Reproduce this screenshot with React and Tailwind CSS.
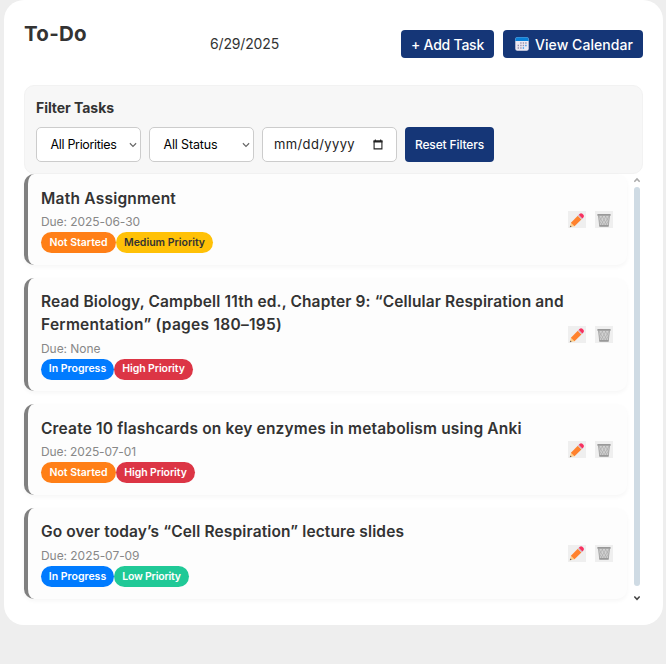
const STATUS = {
  notStarted: { label: 'Not Started', cls: 'bg-[#ff7f17] text-white w-[75px]' },
  inProgress: { label: 'In Progress', cls: 'bg-[#007bff] text-white w-[73px]' },
};

const PRIORITY = {
  high: { label: 'High Priority', cls: 'bg-[#dc3545] text-white w-[79px] tracking-[-0.08px]' },
  medium: { label: 'Medium Priority', cls: 'bg-[#ffc107] text-[#333] w-[97px]' },
  low: { label: 'Low Priority', cls: 'bg-[#20c997] text-white w-[75px] tracking-[-0.2px]' },
};

const TASKS = [
  {
    lines: [{ text: 'Math Assignment', cls: 'tracking-[0.23px]' }],
    due: '2025-06-30', dueCls: 'tracking-[-0.066px]', status: 'notStarted', priority: 'medium',
    height: 'h-[91px]',
  },
  {
    lines: [
      { text: 'Read Biology, Campbell 11th ed., Chapter 9: “Cellular Respiration and', cls: 'tracking-[0.135px]' },
      { text: 'Fermentation” (pages 180–195)', cls: 'tracking-[0.265px]' },
    ],
    due: 'None', dueCls: 'tracking-[-0.045px]', status: 'inProgress', priority: 'high',
    height: 'h-[113.7px]',
  },
  {
    lines: [{ text: 'Create 10 flashcards on key enzymes in metabolism using Anki', cls: 'tracking-[0.175px]' }],
    due: '2025-07-01', dueCls: 'tracking-[-0.114px]', status: 'notStarted', priority: 'high',
    height: 'h-[91px]',
  },
  {
    lines: [{ text: 'Go over today’s “Cell Respiration” lecture slides', cls: 'tracking-[0.13px]' }],
    due: '2025-07-09', dueCls: 'tracking-[-0.051px]', status: 'inProgress', priority: 'low',
    height: 'h-[91px]',
  },
];

function CalendarIcon() {
  return (
    <svg className="h-[14px] w-[14px] shrink-0" viewBox="0 0 14 14">
      <rect x="0.3" y="0.3" width="13.4" height="13.4" rx="2" fill="#eeeaf3" />
      <path d="M0.3 4V2.3a2 2 0 0 1 2-2h9.4a2 2 0 0 1 2 2V4z" fill="#0a80d8" />
      <g fill="#9a93ad">
        <path d="M5.2 5.3h1.4v1.4H5.2zM7.7 5.3h1.4v1.4H7.7zM10.2 5.3h1.4v1.4h-1.4zM2.6 7.8H4v1.4H2.6zM5.2 7.8h1.4v1.4H5.2zM7.7 7.8h1.4v1.4H7.7zM2.6 10.3H4v1.4H2.6zM5.2 10.3h1.4v1.4H5.2z" />
      </g>
      <path d="M10.2 7.8h1.4v1.4h-1.4zM7.7 10.3h1.4v1.4H7.7z" fill="#3d9be8" />
    </svg>
  );
}

function PencilIcon() {
  return (
    <svg className="h-[16px] w-[16px]" viewBox="0 0 16 16">
      <path d="M0.8 15.3l1.2-4.8 3.7 3.7z" fill="#ffd08a" />
      <path d="M0.8 15.3l.5-1.9 1.4 1.4z" fill="#6b5b5b" />
      <path d="M1.9 10.7l6.9-6.9 3.6 3.6-6.9 6.9z" fill="#ff822d" />
      <path d="M8.8 3.8l1.2-1.2 3.6 3.6-1.2 1.2z" fill="#d5b9c3" />
      <path d="M9.8 2.8l1-1a1.9 1.9 0 0 1 2.6 0l1 1a1.9 1.9 0 0 1 0 2.6l-1 1z" fill="#f8305f" />
    </svg>
  );
}

function TrashIcon() {
  return (
    <svg className="h-[16px] w-[16px]" viewBox="0 0 16 16">
      <path d="M2.4 3h11.2l-1.2 11.5H3.6z" fill="#d2d2d2" />
      <path
        d="M3 4l5.4 9.6M6 4l5 9M9.3 4l3 5M3.6 9l2.8 4.6M13 4L7.6 13.6M10 4l-5 9M6.7 4l-3 5M12.4 9l-2.8 4.6"
        stroke="#a6a6a6" strokeWidth="0.6" fill="none"
      />
      <path d="M2.5 3.4l1.2 10.4M13.5 3.4l-1.2 10.4" stroke="#a6a6a6" strokeWidth="1" />
      <rect x="1.3" y="1.9" width="13.4" height="1.8" rx="0.5" fill="#999" />
      <rect x="3.3" y="13.1" width="9.4" height="1.7" rx="0.5" fill="#999" />
    </svg>
  );
}

function Chevron() {
  return (
    <svg className="h-[6px] w-[8px]" viewBox="0 0 9 6" fill="none" stroke="#666" strokeWidth="1.3">
      <path d="M1 1l3.5 3.5L8 1" />
    </svg>
  );
}

function Badge({ label, cls }) {
  return (
    <span className={`flex h-[21px] items-center justify-center rounded-full text-[10.5px] font-semibold ${cls}`}>
      {label}
    </span>
  );
}

function TaskCard({ task }) {
  return (
    <li className={`flex items-center justify-between rounded-[10px] border-l-4 border-[#808080] bg-[#fdfdfd] pl-[13px] pr-[14px] shadow-[0_2px_4px_rgba(0,0,0,0.04)] ${task.height}`}>
      <div className="flex flex-col pt-[2px]">
        <h3 className="text-[15.5px] font-semibold leading-[22.6px] text-[#333]">
          {task.lines.map((l) => (
            <span key={l.text} className={`block ${l.cls}`}>{l.text}</span>
          ))}
        </h3>
        <p className={`mt-[2px] text-[12px] leading-[19px] text-[#888] ${task.dueCls}`}>Due: {task.due}</p>
        <div className="mt-[1px] flex">
          <Badge {...STATUS[task.status]} />
          <Badge {...PRIORITY[task.priority]} />
        </div>
      </div>
      <div className="flex gap-[9px]">
        <button className="flex h-[17px] w-[18px] items-center justify-center bg-[#efefef]" aria-label="Edit"><PencilIcon /></button>
        <button className="flex h-[17px] w-[18px] items-center justify-center bg-[#efefef]" aria-label="Delete"><TrashIcon /></button>
      </div>
    </li>
  );
}

function Select({ label, cls }) {
  return (
    <button className="flex h-[35px] w-[105px] items-center justify-between rounded-[5px] border border-[#ccc] bg-white pl-[13.5px] pr-[3px] text-[12.5px] text-black">
      <span className={`pt-[2px] ${cls}`}>{label}</span>
      <Chevron />
    </button>
  );
}

export default function App() {
  return (
    <div className="h-[664px] w-[666px] overflow-hidden whitespace-nowrap bg-[#eee] pl-1 pr-[3px] font-['Inter',sans-serif]">
      <main className="h-[625px] rounded-[20px] bg-white px-5">
        <header className="flex h-[85px] items-start">
          <h1 className="w-[186px] pt-[20px] text-[20.5px] font-bold leading-[28px] tracking-[0.25px] text-[#333]">To-Do</h1>
          <span className="w-[191px] pt-[34px] text-[14px] leading-[20px] tracking-[-0.158px] text-[#333]">6/29/2025</span>
          <div className="flex gap-[9px] pt-[30px] text-[14px] font-medium text-white">
            <button className="flex h-[28px] w-[93px] items-center justify-center rounded-[4px] bg-[#153677] tracking-[-0.24px]">+ Add Task</button>
            <button className="flex h-[28px] w-[140px] items-center gap-[6px] rounded-[4px] bg-[#153677] pl-[12px] tracking-[0.061px]">
              <CalendarIcon />
              View Calendar
            </button>
          </div>
        </header>

        <section className="h-[89px] w-[619px] rounded-[10px] border border-[#f2f2f2] bg-[#f7f7f7] px-[11px] pt-[12px]">
          <h2 className="text-[14px] font-bold leading-[20px] tracking-[-0.051px] text-[#333]">Filter Tasks</h2>
          <div className="mt-[9px] flex gap-2">
            <Select label="All Priorities" cls="tracking-[-0.325px]" />
            <Select label="All Status" cls="tracking-[-0.147px]" />
            <div className="flex h-[35px] w-[135px] items-center justify-between rounded-[5px] border border-[#ccc] bg-white pl-[11px] pr-[13px] text-[13px] text-[#222]">
              <span className="tracking-[0.37px]">mm/dd/yyyy</span>
              <svg className="h-[11px] w-[10px]" viewBox="0 0 11 12" fill="none">
                <path d="M1.2 2.2h8.6v8.6H1.2z" stroke="#222" strokeWidth="1.2" />
                <path d="M0.6 1.6h9.8v2.2H0.6zM2 0.4h1.2v1.6H2zM7.8 0.4H9v1.6H7.8z" fill="#222" />
              </svg>
            </div>
            <button className="flex h-[35px] w-[89px] items-center justify-center rounded-[4px] bg-[#153677] text-[12px] font-medium tracking-[-0.144px] text-white">Reset Filters</button>
          </div>
        </section>

        <div className="flex">
          <ul className="flex w-[603px] flex-col gap-[12.7px]">
            {TASKS.map((t) => (
              <TaskCard key={t.due} task={t} />
            ))}
          </ul>
          <div className="ml-[7px] flex h-[430px] w-[6px] flex-col items-center pt-[3px]">
            <svg className="h-[6px] w-[6px]" viewBox="0 0 6 6" fill="none" stroke="#aaa" strokeWidth="1.6"><path d="M0.3 4.8L3 2l2.7 2.8" /></svg>
            <div className="mt-[4px] h-[399px] w-[6px] rounded-[3px] bg-[#cfdbe4]" />
            <svg className="mt-[9px] h-[6px] w-[6px]" viewBox="0 0 6 6" fill="none" stroke="#444" strokeWidth="1.6"><path d="M0.3 1.5L3 4.3l2.7-2.8" /></svg>
          </div>
        </div>
      </main>
    </div>
  );
}
